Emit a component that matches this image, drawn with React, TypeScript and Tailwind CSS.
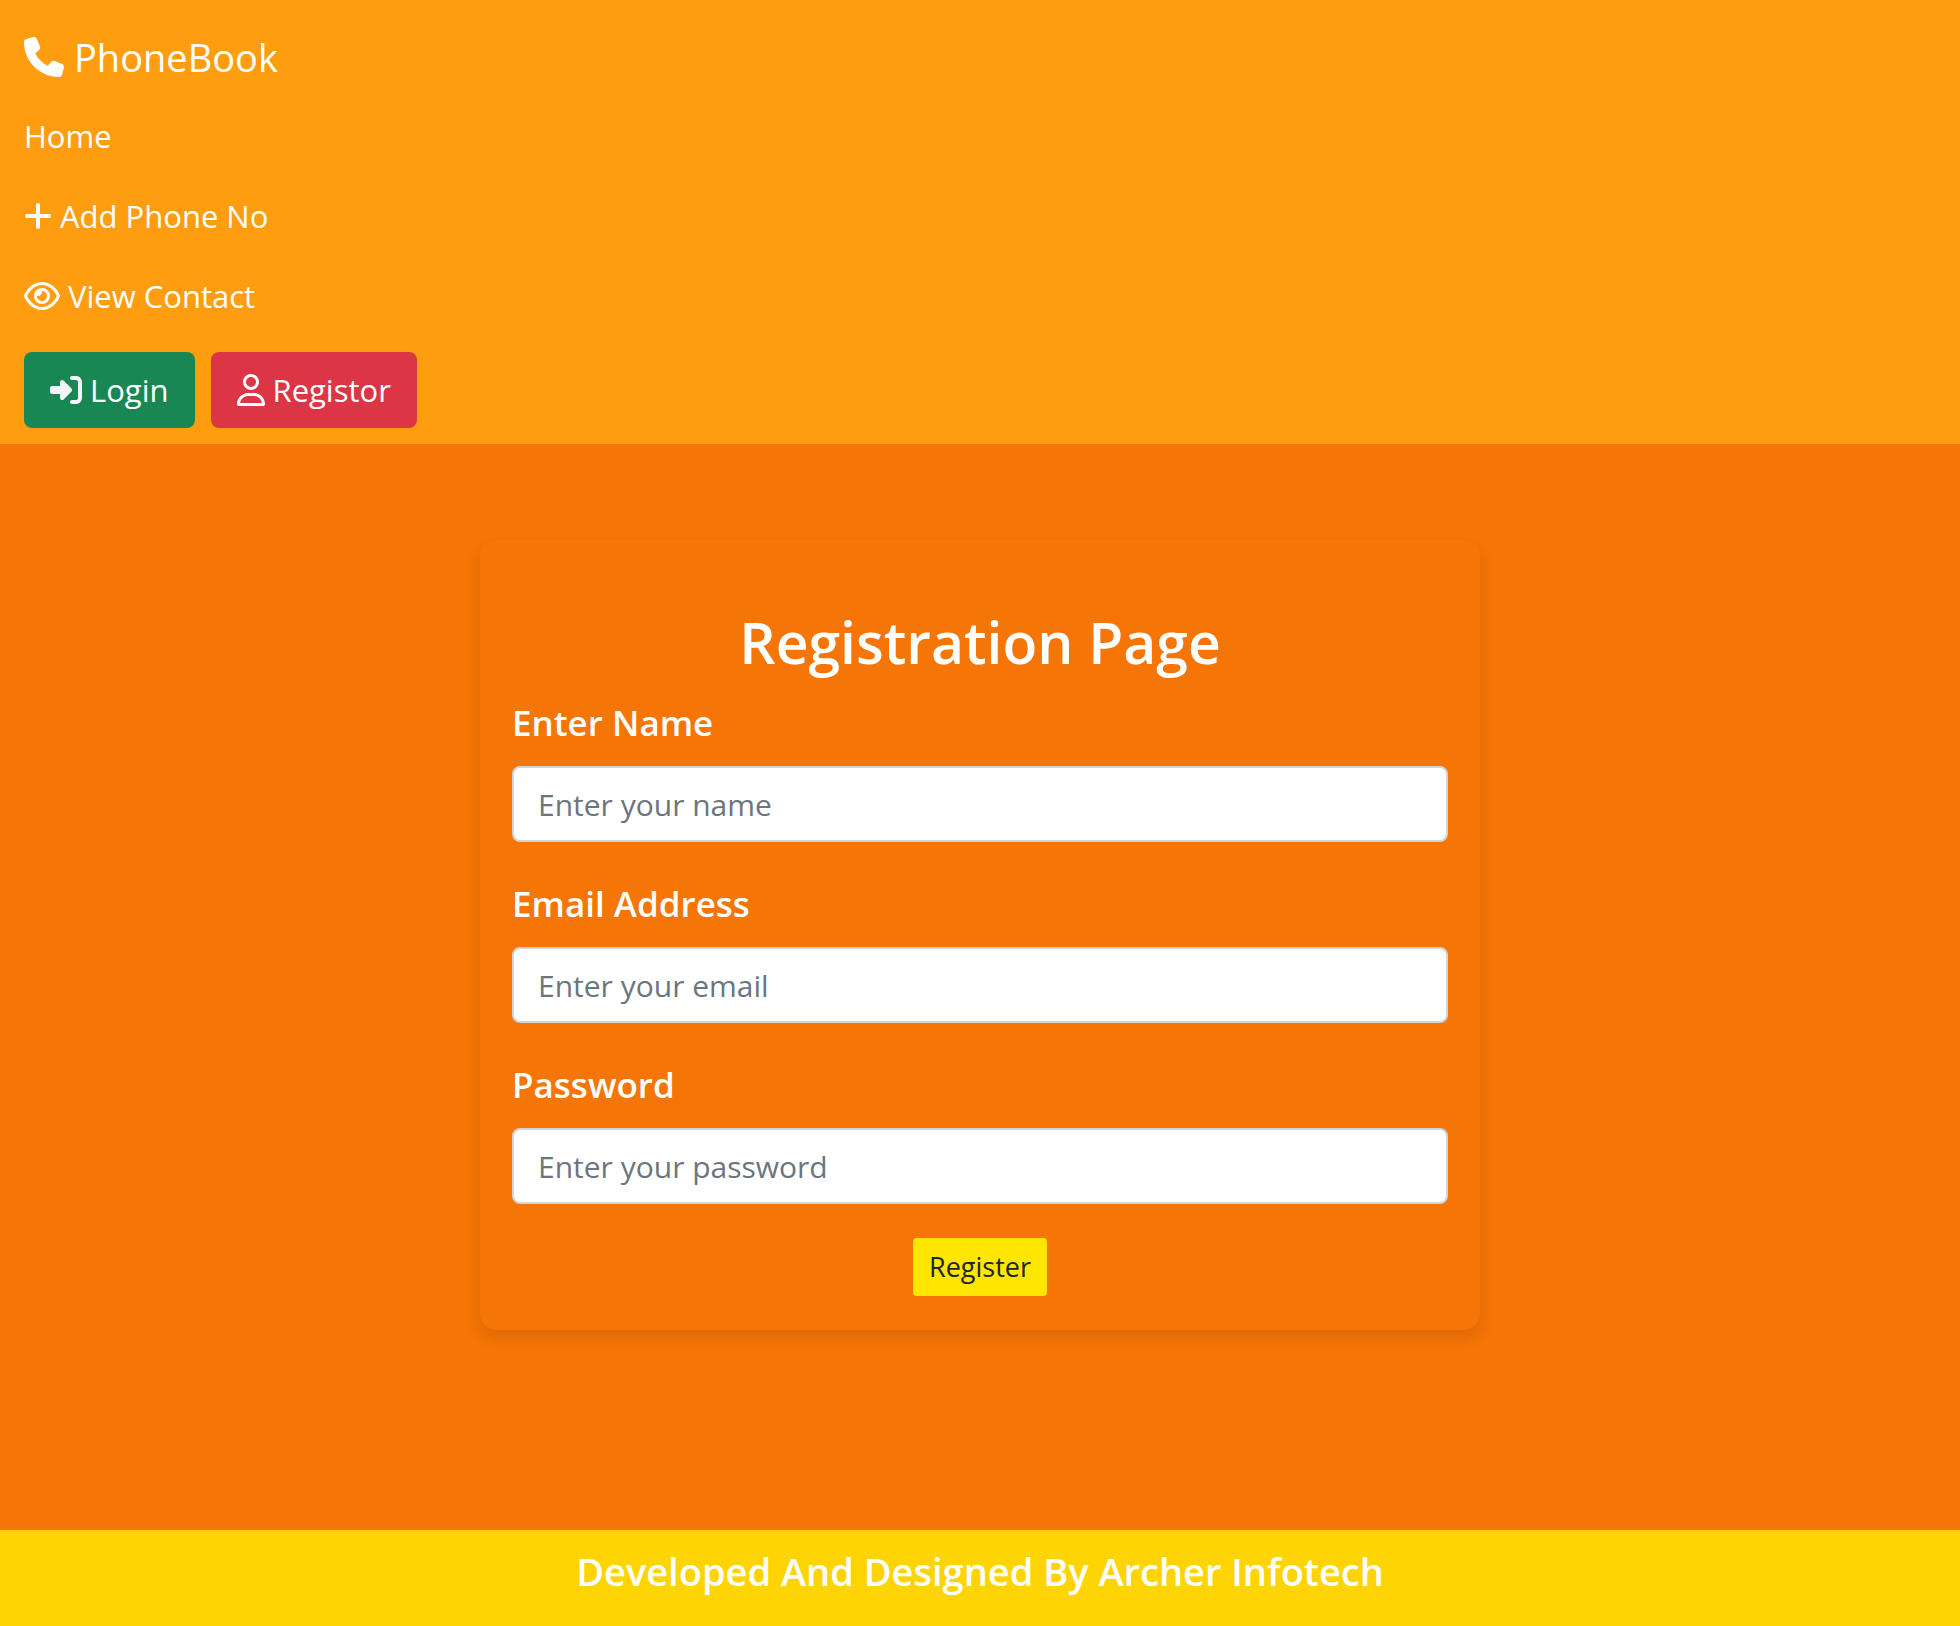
import { FaPhone, FaPlus, FaRegEye, FaRegUser, FaRightToBracket } from "react-icons/fa6";

type FieldProps = {
  id: string;
  label: string;
  type: string;
  placeholder: string;
};

function Field({ id, label, type, placeholder }: FieldProps) {
  return (
    <div className="mb-8 flex flex-col gap-[14px]">
      <label htmlFor={id} className="text-[35px] leading-[59px] font-semibold text-white">
        {label}
      </label>
      <input
        id={id}
        type={type}
        placeholder={placeholder}
        className="h-[76px] w-full rounded-lg border-2 border-[#ced4da] bg-white px-6 text-[30px] text-[#212529] placeholder:text-[#6c757d] placeholder:opacity-100"
      />
    </div>
  );
}

function Header() {
  return (
    <header className="bg-[#ff9d10] px-6 py-4 text-white">
      <nav>
        <a href="#" className="flex h-20 items-center gap-[10px] pt-0.5 text-[38px] leading-[60px]">
          <FaPhone className="size-10" />
          PhoneBook
        </a>
        <ul className="mb-4 text-[31px] leading-[48px]">
          <li>
            <a href="#" className="flex h-20 items-center">
              Home
            </a>
          </li>
          <li>
            <a href="#" className="flex h-20 items-center gap-2">
              <FaPlus className="h-8 w-7" />
              Add Phone No
            </a>
          </li>
          <li>
            <a href="#" className="flex h-20 items-center gap-2">
              <FaRegEye className="h-8 w-9" />
              View Contact
            </a>
          </li>
        </ul>
        <div className="flex gap-4 text-[31px] leading-[48px]">
          <button
            type="button"
            className="flex h-[76px] items-center gap-2 rounded-lg bg-[#198754] px-[26px]"
          >
            <FaRightToBracket className="size-8 text-[#f3f4f8]" />
            Login
          </button>
          <button
            type="button"
            className="flex h-[76px] items-center gap-2 rounded-lg bg-[#dc3545] px-[26px]"
          >
            <FaRegUser className="h-8 w-7" />
            Registor
          </button>
        </div>
      </nav>
    </header>
  );
}

export default function App() {
  return (
    <div
      className="flex min-h-screen flex-col bg-[#f57506]"
      style={{ fontFamily: '"Segoe UI", "Open Sans", "Noto Sans", sans-serif' }}
    >
      <Header />
      <main className="flex flex-1 flex-col items-center px-6 pt-24 pb-[200px]">
        <form className="w-full max-w-[1000px] rounded-2xl p-8 shadow-[0_8px_16px_rgba(0,0,0,0.1)]">
          <h1 className="mt-[34px] mb-[14px] text-center text-[57px] leading-[73px] font-semibold text-white">
            Registration Page
          </h1>
          <Field id="name" label="Enter Name" type="text" placeholder="Enter your name" />
          <Field id="email" label="Email Address" type="email" placeholder="Enter your email" />
          <Field
            id="password"
            label="Password"
            type="password"
            placeholder="Enter your password"
          />
          <div className="flex justify-center py-0.5">
            <button
              type="submit"
              className="rounded-sm bg-[#ffe600] px-4 py-2 text-[27px] leading-[42px] text-[#212529]"
            >
              Register
            </button>
          </div>
        </form>
      </main>
      <footer className="bg-[#ffd404] px-6 py-4">
        <p className="pb-[14px] text-center text-[38px] leading-[50px] font-semibold text-white">
          Developed And Designed By Archer Infotech
        </p>
      </footer>
    </div>
  );
}
